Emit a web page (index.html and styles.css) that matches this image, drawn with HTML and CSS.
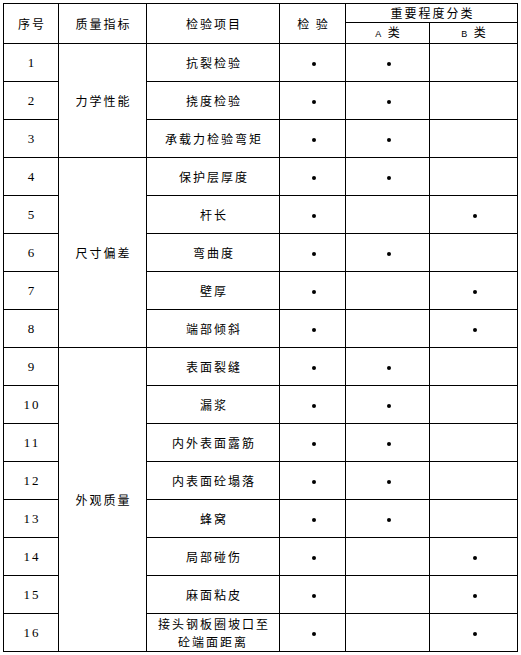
FILE: index.html
```html
<!DOCTYPE html>
<html lang="zh">
<head>
<meta charset="utf-8">
<link rel="stylesheet" href="styles.css">
</head>
<body>
<table class="grid">
  <colgroup>
    <col class="c-no"><col class="c-idx"><col class="c-item"><col class="c-chk"><col class="c-a"><col class="c-b">
  </colgroup>
  <thead>
    <tr class="h1">
      <th rowspan="2" class="sp4">序号</th>
      <th rowspan="2">质量指标</th>
      <th rowspan="2">检验项目</th>
      <th rowspan="2" class="sp4">检 验</th>
      <th colspan="2" class="sp3">重要程度分类</th>
    </tr>
    <tr class="h2">
      <th><span class="lat">A</span> 类</th>
      <th><span class="lat">B</span> 类</th>
    </tr>
  </thead>
  <tbody>
    <tr><td class="num">1</td><td rowspan="3">力学性能</td><td>抗裂检验</td><td><span class="dot"></span></td><td><span class="dot"></span></td><td></td></tr>
    <tr><td class="num">2</td><td>挠度检验</td><td><span class="dot"></span></td><td><span class="dot"></span></td><td></td></tr>
    <tr><td class="num">3</td><td>承载力检验弯矩</td><td><span class="dot"></span></td><td><span class="dot"></span></td><td></td></tr>
    <tr><td class="num">4</td><td rowspan="5">尺寸偏差</td><td>保护层厚度</td><td><span class="dot"></span></td><td><span class="dot"></span></td><td></td></tr>
    <tr><td class="num">5</td><td>杆长</td><td><span class="dot"></span></td><td></td><td><span class="dot"></span></td></tr>
    <tr><td class="num">6</td><td>弯曲度</td><td><span class="dot"></span></td><td><span class="dot"></span></td><td></td></tr>
    <tr><td class="num">7</td><td>壁厚</td><td><span class="dot"></span></td><td></td><td><span class="dot"></span></td></tr>
    <tr><td class="num">8</td><td>端部倾斜</td><td><span class="dot"></span></td><td></td><td><span class="dot"></span></td></tr>
    <tr><td class="num">9</td><td rowspan="8">外观质量</td><td>表面裂缝</td><td><span class="dot"></span></td><td><span class="dot"></span></td><td></td></tr>
    <tr><td class="num">10</td><td>漏浆</td><td><span class="dot"></span></td><td><span class="dot"></span></td><td></td></tr>
    <tr><td class="num">11</td><td>内外表面露筋</td><td><span class="dot"></span></td><td><span class="dot"></span></td><td></td></tr>
    <tr><td class="num">12</td><td>内表面砼塌落</td><td><span class="dot"></span></td><td><span class="dot"></span></td><td></td></tr>
    <tr><td class="num">13</td><td>蜂窝</td><td><span class="dot"></span></td><td><span class="dot"></span></td><td></td></tr>
    <tr><td class="num">14</td><td>局部碰伤</td><td><span class="dot"></span></td><td></td><td><span class="dot"></span></td></tr>
    <tr><td class="num">15</td><td>麻面粘皮</td><td><span class="dot"></span></td><td></td><td><span class="dot"></span></td></tr>
    <tr><td class="num">16</td><td class="two">接头钢板圈坡口至<br>砼端面距离</td><td><span class="dot"></span></td><td></td><td><span class="dot"></span></td></tr>
  </tbody>
</table>
</body>
</html>
```

FILE: styles.css
```css
html, body {
  margin: 0;
  padding: 0;
  background: #ffffff;
}
body {
  padding: 3px 0 0 3px;
  font-family: "Noto Sans CJK SC", "Noto Sans", sans-serif;
  font-size: 12px;
  color: #000;
}
.grid {
  border-collapse: collapse;
  table-layout: fixed;
  width: 514px;
}
.c-no { width: 55px; }
.c-idx { width: 88px; }
.c-item { width: 133px; }
.c-chk { width: 66px; }
.c-a { width: 84px; }
.c-b { width: 88px; }
.grid th, .grid td {
  border: 1px solid #000;
  padding: 0;
  text-align: center;
  vertical-align: middle;
  font-weight: normal;
  letter-spacing: 2px;
  text-indent: 2px;
  line-height: 18px;
}
.grid tbody tr { height: 38px; }
.h1 { height: 19px; }
.h2 { height: 19px; }
.sp4 { letter-spacing: 4px; text-indent: 4px; }
.sp3 { letter-spacing: 3px; text-indent: 3px; }
.lat {
  font-family: "Liberation Sans", sans-serif;
  font-size: 9px;
}
.num {
  font-family: "Liberation Serif", serif;
  font-size: 13px;
  letter-spacing: 3px;
  text-indent: 3px;
}
.two { line-height: 18px; }
.dot {
  display: inline-block;
  width: 4px;
  height: 4px;
  border-radius: 50%;
  background: #000;
  vertical-align: middle;
}
```
